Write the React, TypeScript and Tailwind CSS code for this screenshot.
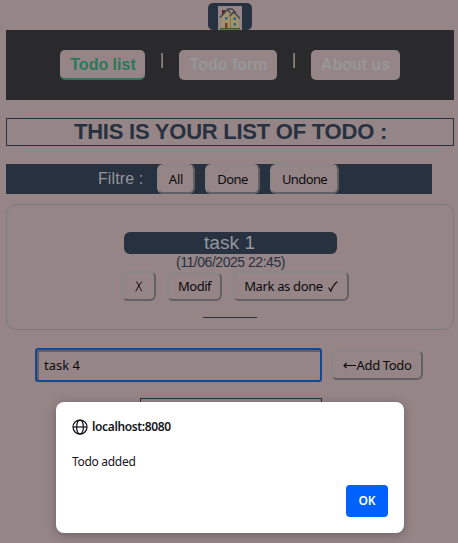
import type { ReactNode } from "react";

function Button({ className = "", children }: { className?: string; children: ReactNode }) {
  return (
    <button
      className={`flex shrink-0 items-center justify-center whitespace-nowrap rounded-[6px] border-2 border-t-[#8b8789] border-l-[#8b8789] border-r-[#626063] border-b-[#626063] bg-[#958587] font-['Noto_Sans',sans-serif] text-[13px] leading-none text-[#0b0a0c] ${className}`}
    >
      {children}
    </button>
  );
}

function House() {
  return (
    <svg width="24" height="24" viewBox="0 0 24 24" className="bg-[#958587]">
      <path d="M4 4h3v5H4z" fill="#68202e" />
      <path d="M3.500 11 9 4l5-1 7 8v11H3.500z" fill="#a1926b" />
      <path d="M12.500 12v10" stroke="#8a7540" strokeWidth="1" />
      <path d="M2 11.500 9.500 3.500 12.500 7M11.500 10.500l4-4.500 6.500 6.500M9.500 3 14 3l4 4" fill="none" stroke="#3c4350" strokeWidth="1.4" />
      <path d="M7 11h2.500v2.500H7zM15.500 11.500h2.500v2.500h-2.500zM15.500 17h2.500v2.500h-2.500z" fill="#286491" />
      <path d="M7 17h2.500v5H7z" fill="#713e30" />
      <path d="M2 22h20v1.500H2z" fill="#3b6128" />
    </svg>
  );
}

function Globe() {
  return (
    <svg width="16" height="16" viewBox="0 0 16 16" fill="none" stroke="#15141a" strokeWidth="1.25">
      <circle cx="8" cy="8" r="7" />
      <ellipse cx="8" cy="8" rx="3.4" ry="7" />
      <path d="M1 8h14" />
    </svg>
  );
}

const link = "flex h-[30px] items-center justify-center rounded-[5px] bg-[#958587] text-[16px] font-bold whitespace-nowrap";

export default function App() {
  return (
    <div className="relative h-[543px] w-[458px] overflow-hidden bg-[#958587] px-[6px] pt-[3px] font-['Liberation_Sans',Arial,sans-serif] text-[#27313f]">
      <header>
        <div className="ml-[202px] flex h-[27px] w-[44px] justify-center rounded-[5px] bg-[#27313f] pt-[3px]">
          <House />
        </div>
        <nav className="flex h-[70px] w-[448px] items-center bg-[#2a2a2c] pl-[54px] text-[#95979b]">
          <a className={`${link} w-[85px] border-b-2 border-[#2d785a] pt-[1px] pl-px text-[#2d785a]`}>Todo list</a>
          <span className="mb-[9px] ml-[16px] h-[15px] w-[2px] self-center border-l border-[#647078] bg-[#957d65]" />
          <a className={`${link} ml-[16px] w-[98px] pl-px`}>Todo form</a>
          <span className="mb-[9px] ml-[16px] h-[15px] w-[2px] self-center border-l border-[#647078] bg-[#957d65]" />
          <a className={`${link} ml-[16px] w-[89px]`}>About us</a>
        </nav>
      </header>
      <h1 className="mt-[18px] flex h-[28px] w-[448px] items-center justify-center border border-[#27313f] pb-px pl-px text-[22px] font-bold tracking-[-0.24px] whitespace-nowrap">
        THIS IS YOUR LIST OF TODO :
      </h1>
      <div className="mt-[18px] flex h-[30px] w-[426px] items-center bg-[#27313f] pl-[92px]">
        <span className="w-[59px] text-[16px] tracking-[0.1px] whitespace-nowrap text-[#95979b]">Filtre :</span>
        <Button className="h-[30px] w-[38px] tracking-[-0.2px]">All</Button>
        <Button className="ml-[10px] h-[30px] w-[55px] tracking-[-0.6px]">Done</Button>
        <Button className="ml-[10px] h-[30px] w-[69px] tracking-[-0.6px]">Undone</Button>
      </div>
      <section className="mt-[10px] h-[126px] w-[448px] rounded-[10px] border border-[#7e7b7e] pt-[27px]">
        <div className="ml-[117px] flex h-[22px] w-[213px] items-center justify-center rounded-[6px] bg-[#27313f] pr-[2px] pb-px text-[19.2px] leading-none text-[#95979b]">
          task 1
        </div>
        <div className="ml-[117px] h-[17px] w-[213px] text-center text-[14px] leading-[16px] tracking-[-0.47px]">(11/06/2025 22:45)</div>
        <div className="ml-[115px] flex h-[30px] items-end">
          <Button className="h-[30px] w-[34px]">
            <svg width="8" height="11" viewBox="0 0 8 11" fill="none" stroke="#0b0a0c">
              <path d="M1 .7C2.7 1 4.5 7 6.8 10M7 .7C4.5 3 2.5 7 .8 10.3" />
            </svg>
          </Button>
          <Button className="ml-[11px] h-[29px] w-[55px] tracking-[-0.5px]">Modif</Button>
          <Button className="ml-[11px] h-[30px] w-[116px] tracking-[-0.35px]">
            Mark as done
            <svg className="ml-[5px]" width="10" height="11" viewBox="0 0 10 11" fill="none" stroke="#0b0a0c" strokeWidth="1.1">
              <path d="M.6 6.500l2.200 3.800C4.300 6.500 6 3 9.300.8" />
            </svg>
          </Button>
        </div>
        <div className="mt-[16px] ml-[196px] h-px w-[54px] bg-[#27313f]" />
      </section>
      <div className="mt-[18px] ml-[29px] flex h-[34px] items-center">
        <input
          readOnly
          value="task 4"
          className="h-[34px] w-[287px] rounded-[3px] border-2 border-[#124793] bg-[#958587] pl-[7px] font-['Noto_Sans',sans-serif] text-[13px] text-[#0b0a0c] shadow-[inset_2px_2px_0_#626063] outline-none"
        />
        <Button className="ml-[9px] h-[30px] w-[92px] tracking-[-0.35px]">
          <svg className="mr-px" width="13" height="9" viewBox="0 0 13 9" fill="none" stroke="#0b0a0c" strokeWidth="1.1">
            <path d="M13 4.500H1M3.500 2L1 4.500 3.500 7" />
          </svg>
          Add Todo
        </Button>
      </div>
      <div className="mt-[16px] ml-[134px] h-[30px] w-[182px] border border-[#27313f]" />
      <div
        role="dialog"
        className="absolute top-[402px] left-[56px] flex h-[131px] w-[348px] flex-col rounded-[8px] bg-white p-4 font-['Noto_Sans',sans-serif] text-[#15141a] shadow-[0_2px_10px_rgba(40,30,40,0.35)]"
      >
        <div className="flex h-[17px] items-center gap-[4px] text-[12px] font-semibold tracking-[-0.36px]">
          <Globe />
          <span>localhost:8080</span>
        </div>
        <p className="mt-[18px] h-[17px] text-[12px] leading-[17px] tracking-[-0.3px]">Todo added</p>
        <button className="mt-[15px] flex h-[32px] w-[42px] shrink-0 items-center justify-center self-end rounded-[4px] bg-[#0061fe] text-[12px] font-semibold text-white">
          OK
        </button>
      </div>
    </div>
  );
}
